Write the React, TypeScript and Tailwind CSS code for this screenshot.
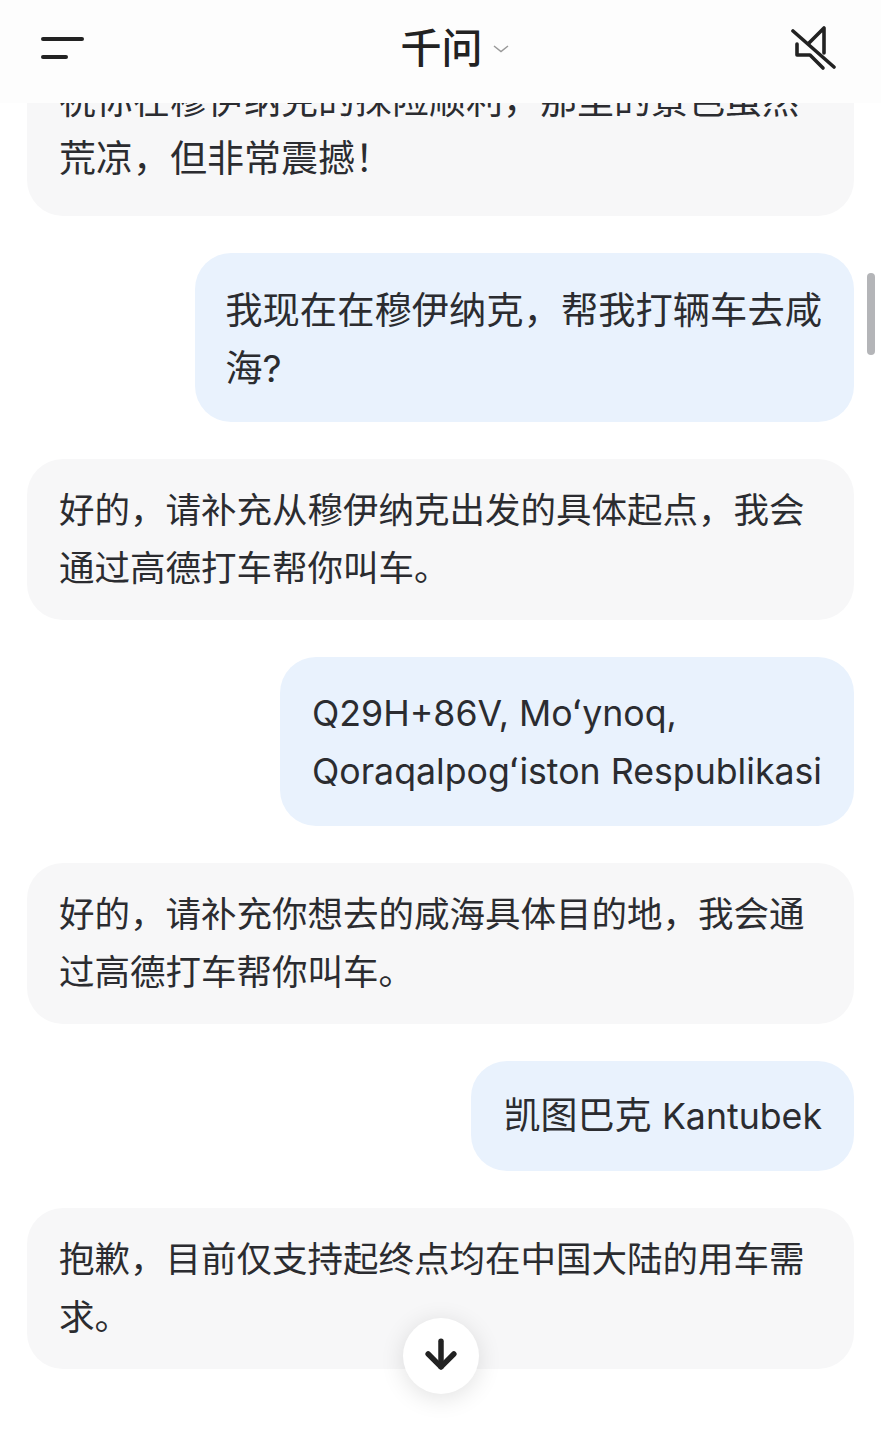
import type { ReactNode } from 'react';
import { ArrowDown } from 'lucide-react';

function Bubble({ mine, className, children }: { mine?: boolean; className: string; children: ReactNode }) {
  const shape = mine ? 'self-end bg-[#e9f2fd]' : 'bg-[#f7f7f8]';
  return <div className={`whitespace-pre rounded-[36px] px-8 ${shape} ${className}`}>{children}</div>;
}

export default function App() {
  return (
    <div className="relative flex h-[1440px] w-[881px] flex-col overflow-hidden bg-white font-['Inter','Noto_Sans_CJK_SC',sans-serif] text-[#2b2c30]">
      <header className="z-10 flex h-[103px] shrink-0 items-center justify-between bg-[#fdfdfd] pb-[7px] pl-[41px] pr-[44px]">
        <div className="flex flex-col gap-[14px]">
          <div className="h-1 w-[43px] rounded-full bg-[#222]" />
          <div className="h-1 w-[27px] rounded-full bg-[#222]" />
        </div>
        <div className="ml-[34px] flex items-center gap-[10px]">
          <span className="text-[41px] leading-none font-medium text-[#222]">千问</span>
          <svg width="16" height="8" viewBox="0 0 16 8" fill="none" stroke="#999" strokeWidth="1.5" className="mt-[2px]">
            <path d="M1 1 L8 6.5 L15 1" />
          </svg>
        </div>
        <svg width="46" height="46" viewBox="0 0 46 46" fill="none" stroke="#222" strokeWidth="3.6" strokeLinecap="round" strokeLinejoin="round">
          <path d="M2 6 L43 42" />
          <path d="M18 18 L33 3 V28" />
          <path d="M6 19 V30 H19 L32 43" />
        </svg>
      </header>

      <main className="-mt-[53px] flex flex-col gap-[37px] px-[27px] leading-[58px]">
        <Bubble className="pt-[22px] pb-[28px] text-[37px]">{'祝你在穆伊纳克的探险顺利，那里的景色虽然\n荒凉，但非常震撼！'}</Bubble>
        <Bubble mine className="pt-[29px] pb-[24px] pl-[30px] text-[37.3px]">{'我现在在穆伊纳克，帮我打辆车去咸\n海?'}</Bubble>
        <Bubble className="pt-[23px] pb-[22px] text-[35.5px]">{'好的，请补充从穆伊纳克出发的具体起点，我会\n通过高德打车帮你叫车。'}</Bubble>
        <Bubble mine className="pt-[27px] pb-[26px] text-[35.7px]">{'Q29H+86V, Moʻynoq,\nQoraqalpogʻiston Respublikasi'}</Bubble>
        <Bubble className="pt-[23px] pb-[22px] text-[35.5px]">{'好的，请补充你想去的咸海具体目的地，我会通\n过高德打车帮你叫车。'}</Bubble>
        <Bubble mine className="py-[26px] text-[37px]">
          凯图巴克 <span className="text-[35.7px]">Kantubek</span>
        </Bubble>
        <Bubble className="pt-[23px] pb-[22px] text-[35.5px]">{'抱歉，目前仅支持起终点均在中国大陆的用车需\n求。'}</Bubble>
      </main>

      {/* scrollbar thumb */}
      <div className="absolute top-[273px] right-[6px] h-[82px] w-[8px] rounded-full bg-[#b4b5b8]" />

      <button className="absolute top-[1318px] left-[403px] flex h-[76px] w-[76px] items-center justify-center rounded-full bg-white shadow-[0_4px_24px_rgba(0,0,0,0.12)]">
        <ArrowDown size={44} strokeWidth={3} className="-mt-1 text-[#222]" />
      </button>
    </div>
  );
}
